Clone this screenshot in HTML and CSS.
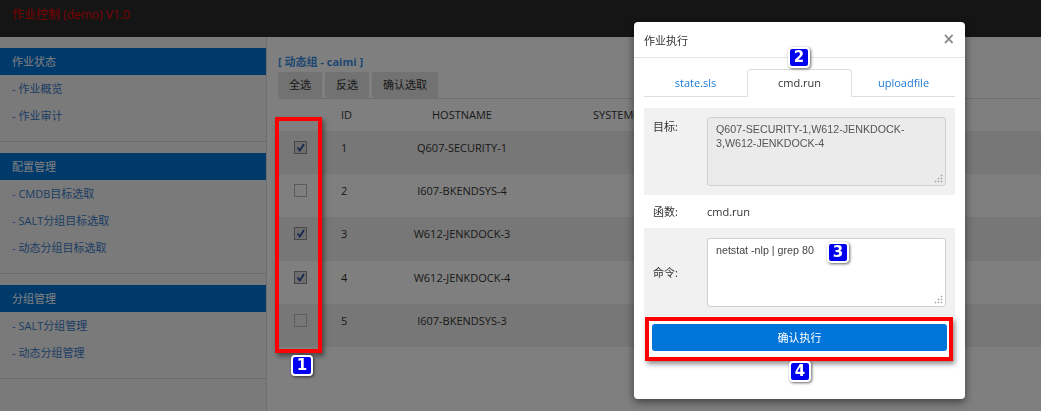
FILE: index.html
```html
<!DOCTYPE html>
<html lang="zh">
<head>
<meta charset="utf-8">
<title>作业控制 (demo) V1.0</title>
<link rel="stylesheet" href="styles.css">
</head>
<body>
<header class="topbar"><span class="brand">作业控制 (demo) V1.0</span></header>
<div class="layout">
  <aside class="sidebar">
    <div class="nav-group">
      <div class="nav-head">作业状态</div>
      <div class="nav-item">- 作业概览</div>
      <div class="nav-item">- 作业审计</div>
    </div>
    <div class="nav-group">
      <div class="nav-head">配置管理</div>
      <div class="nav-item">- CMDB目标选取</div>
      <div class="nav-item">- SALT分组目标选取</div>
      <div class="nav-item">- 动态分组目标选取</div>
    </div>
    <div class="nav-group">
      <div class="nav-head">分组管理</div>
      <div class="nav-item">- SALT分组管理</div>
      <div class="nav-item">- 动态分组管理</div>
    </div>
  </aside>
  <main class="content">
    <div class="group-title">[ 动态组 - caimi ]</div>
    <div class="toolbar">
      <span class="btn">全选</span>
      <span class="btn">反选</span>
      <span class="btn">确认选取</span>
    </div>
    <table class="hosts">
      <colgroup><col class="c1"><col class="c2"><col class="c3"><col class="c4"></colgroup>
      <thead>
        <tr><th></th><th class="id">ID</th><th class="host">HOSTNAME</th><th class="sys">SYSTEM(OS)</th></tr>
      </thead>
      <tbody>
        <tr class="odd"><td class="chk"><span class="cb checked"><svg viewBox="0 0 11 11" width="11" height="11"><polyline points="2.5,5.5 4.8,8.5 9,2" fill="none" stroke="#2d4c9c" stroke-width="1.8"/></svg></span></td><td class="id">1</td><td class="host">Q607-SECURITY-1</td><td></td></tr>
        <tr><td class="chk"><span class="cb"></span></td><td class="id">2</td><td class="host">I607-BKENDSYS-4</td><td></td></tr>
        <tr class="odd"><td class="chk"><span class="cb checked"><svg viewBox="0 0 11 11" width="11" height="11"><polyline points="2.5,5.5 4.8,8.5 9,2" fill="none" stroke="#2d4c9c" stroke-width="1.8"/></svg></span></td><td class="id">3</td><td class="host">W612-JENKDOCK-3</td><td></td></tr>
        <tr><td class="chk"><span class="cb checked"><svg viewBox="0 0 11 11" width="11" height="11"><polyline points="2.5,5.5 4.8,8.5 9,2" fill="none" stroke="#2d4c9c" stroke-width="1.8"/></svg></span></td><td class="id">4</td><td class="host">W612-JENKDOCK-4</td><td></td></tr>
        <tr class="odd"><td class="chk"><span class="cb"></span></td><td class="id">5</td><td class="host">I607-BKENDSYS-3</td><td></td></tr>
      </tbody>
    </table>
  </main>
</div>

<div class="backdrop"></div>

<div class="modal">
  <div class="modal-header">
    <span class="modal-title">作业执行</span>
    <span class="close">×</span>
  </div>
  <div class="modal-body">
    <div class="tabs">
      <span class="tab">state.sls</span>
      <span class="tab active">cmd.run</span>
      <span class="tab">uploadfile</span>
    </div>
    <div class="form">
      <div class="form-row shaded top">
        <span class="label">目标:</span>
        <div class="field-wrap"><textarea class="field" disabled>Q607-SECURITY-1,W612-JENKDOCK-3,W612-JENKDOCK-4</textarea></div>
      </div>
      <div class="form-row plain">
        <span class="label">函数:</span>
        <span class="value">cmd.run</span>
      </div>
      <div class="form-row shaded cmd">
        <span class="label">命令:</span>
        <div class="field-wrap"><textarea class="field editable">netstat -nlp | grep 80</textarea></div>
      </div>
    </div>
    <div class="submit-wrap"><div class="submit">确认执行</div></div>
  </div>
</div>

<div class="mark mark1"></div>
<div class="mark mark4"></div>
<div class="badge b1">1</div>
<div class="badge b2">2</div>
<div class="badge b3">3</div>
<div class="badge b4">4</div>
</body>
</html>
```

FILE: styles.css
```css
* { box-sizing: border-box; }

html, body {
  margin: 0;
  height: 411px;
}

body {
  font-family: "Open Sans", "Noto Sans CJK SC", sans-serif;
  font-size: 11px;
  color: #333;
  background: #fff;
  overflow: hidden;
}

.topbar {
  height: 37px;
  background: #2a2a2a;
  padding: 6px 0 0 12px;
}

.brand {
  color: #f00000;
  font-size: 12px;
  line-height: 18px;
}

.layout {
  display: flex;
  height: calc(100% - 37px);
}

.sidebar {
  flex: none;
  width: 267px;
  background: #f4f4f4;
  border-right: 1px solid #dcdcdc;
}

.nav-group {
  margin-top: 11px;
  padding-bottom: 12px;
  border-bottom: 1px solid #d6d6d6;
}

.nav-head {
  height: 27px;
  line-height: 27px;
  padding-left: 12px;
  background: #0074d6;
  color: #fff;
}

.nav-item {
  height: 27px;
  line-height: 27px;
  padding-left: 12px;
  color: #3a7bc8;
}

.content {
  flex: 1;
  min-width: 0;
  padding: 16px 0 0 11px;
  overflow: hidden;
}

.group-title {
  line-height: 18px;
  color: #3a8ee6;
  font-weight: bold;
}

.toolbar {
  display: flex;
  gap: 3px;
  margin-top: 1px;
}

.btn {
  height: 26px;
  line-height: 26px;
  padding: 0 11px;
  background: #e4e4e4;
  border-radius: 2px;
  color: #333;
}

.hosts {
  width: 100%;
  border-collapse: collapse;
  table-layout: fixed;
  border-top: 1px solid #dcdcdc;
}

.c1 { width: 44px; }
.c2 { width: 60px; }
.c3 { width: 160px; }

.hosts th {
  height: 32px;
  font-weight: normal;
  color: #333;
  text-align: left;
  vertical-align: middle;
  padding: 0;
  white-space: nowrap;
}

.hosts td {
  height: 43.4px;
  padding: 8px 0 0;
  line-height: 18px;
  vertical-align: top;
  color: #333;
}

.hosts tr.odd td { background: #efefef; }

.hosts .id { padding-left: 19px; }
.hosts .host { text-align: center; }
.hosts th.host { text-align: center; }
.hosts .sys { padding-left: 51px; }

.hosts td.chk { padding-top: 10px; }

.cb {
  display: block;
  width: 13px;
  height: 13px;
  margin: 0 auto;
  border: 1px solid #b8b8b8;
  background: transparent;
}

.cb.checked {
  border-color: #8e8e8e;
  background: #dadada;
}

.cb svg { display: block; }

.backdrop {
  position: fixed;
  inset: 0;
  background: rgba(0, 0, 0, 0.5);
}

.modal {
  position: absolute;
  left: 634px;
  top: 22px;
  width: 331px;
  background: #fff;
  border-radius: 4px;
  box-shadow: 0 3px 9px rgba(0, 0, 0, 0.5);
}

.modal-header {
  height: 36px;
  display: flex;
  align-items: center;
  justify-content: space-between;
  padding: 0 10px;
  border-bottom: 1px solid #e5e5e5;
}

.modal-title {
  font-size: 11px;
  color: #333;
}

.close {
  font-family: "DejaVu Sans", sans-serif;
  font-size: 15px;
  font-weight: bold;
  color: #8a8a8a;
  line-height: 1;
}

.modal-body {
  padding: 11px 10px 48px;
}

.tabs {
  display: flex;
  height: 28px;
  border-bottom: 1px solid #ddd;
}

.tab {
  flex: 1;
  text-align: center;
  line-height: 27px;
  color: #1a7ad4;
}

.tab.active {
  height: 28px;
  background: #fff;
  border: 1px solid #ddd;
  border-bottom-color: #fff;
  border-radius: 4px 4px 0 0;
  color: #333;
  line-height: 26px;
}

.form {
  margin-top: 11px;
}

.form-row {
  display: flex;
  padding: 0 9px;
}

.form-row.shaded { background: #f1f1f1; }

.form-row.top {
  align-items: flex-start;
  padding-top: 9px;
  padding-bottom: 9px;
}

.form-row.plain {
  height: 33px;
  align-items: center;
}

.form-row.cmd {
  align-items: center;
  padding-top: 10px;
  padding-bottom: 9px;
}

.label {
  flex: none;
  width: 54px;
  line-height: 20px;
  color: #333;
}

.value {
  font-size: 11px;
  color: #333;
}

.field-wrap {
  position: relative;
  width: 239px;
  height: 69px;
}

.field-wrap::after {
  content: "";
  position: absolute;
  right: 3px;
  bottom: 3px;
  width: 9px;
  height: 9px;
  background:
    radial-gradient(circle, #a8a8a8 0.8px, transparent 1.1px) 6px 0 / 3px 3px no-repeat,
    radial-gradient(circle, #a8a8a8 0.8px, transparent 1.1px) 3px 3px / 3px 3px no-repeat,
    radial-gradient(circle, #a8a8a8 0.8px, transparent 1.1px) 6px 3px / 3px 3px no-repeat,
    radial-gradient(circle, #a8a8a8 0.8px, transparent 1.1px) 0 6px / 3px 3px no-repeat,
    radial-gradient(circle, #a8a8a8 0.8px, transparent 1.1px) 3px 6px / 3px 3px no-repeat,
    radial-gradient(circle, #a8a8a8 0.8px, transparent 1.1px) 6px 6px / 3px 3px no-repeat;
}

.field {
  display: block;
  width: 100%;
  height: 100%;
  margin: 0;
  border: 1px solid #cfcfcf;
  border-radius: 3px;
  padding: 4px 12px 4px 8px;
  font-family: "Liberation Sans", Arial, sans-serif;
  font-size: 10.7px;
  line-height: 14px;
  color: #555;
  background: #ebebeb;
  resize: none;
  outline: none;
}

.field.editable {
  background: #fff;
  color: #444;
}

.submit-wrap {
  padding: 8px 8px 0;
}

.submit {
  height: 27px;
  line-height: 27px;
  text-align: center;
  background: #0074d9;
  color: #fff;
  border-radius: 3px;
}

.mark {
  position: absolute;
  border: 4px solid #ff0000;
  box-shadow: 2px 3px 5px rgba(0, 0, 0, 0.45);
}

.mark1 { left: 275px; top: 117px; width: 47px; height: 236px; }
.mark4 { left: 645px; top: 317px; width: 308px; height: 44px; }

.badge {
  position: absolute;
  width: 22px;
  height: 21px;
  background: #0000f0;
  border: 2px solid #fff;
  border-radius: 4px;
  color: #fff;
  font-family: "DejaVu Sans", sans-serif;
  font-weight: bold;
  font-size: 15px;
  line-height: 17px;
  text-align: center;
  box-shadow: 1px 1px 3px rgba(0, 0, 0, 0.6);
}

.b1 { left: 291px; top: 355px; }
.b2 { left: 788px; top: 47px; }
.b3 { left: 827px; top: 242px; }
.b4 { left: 789px; top: 361px; }
```
